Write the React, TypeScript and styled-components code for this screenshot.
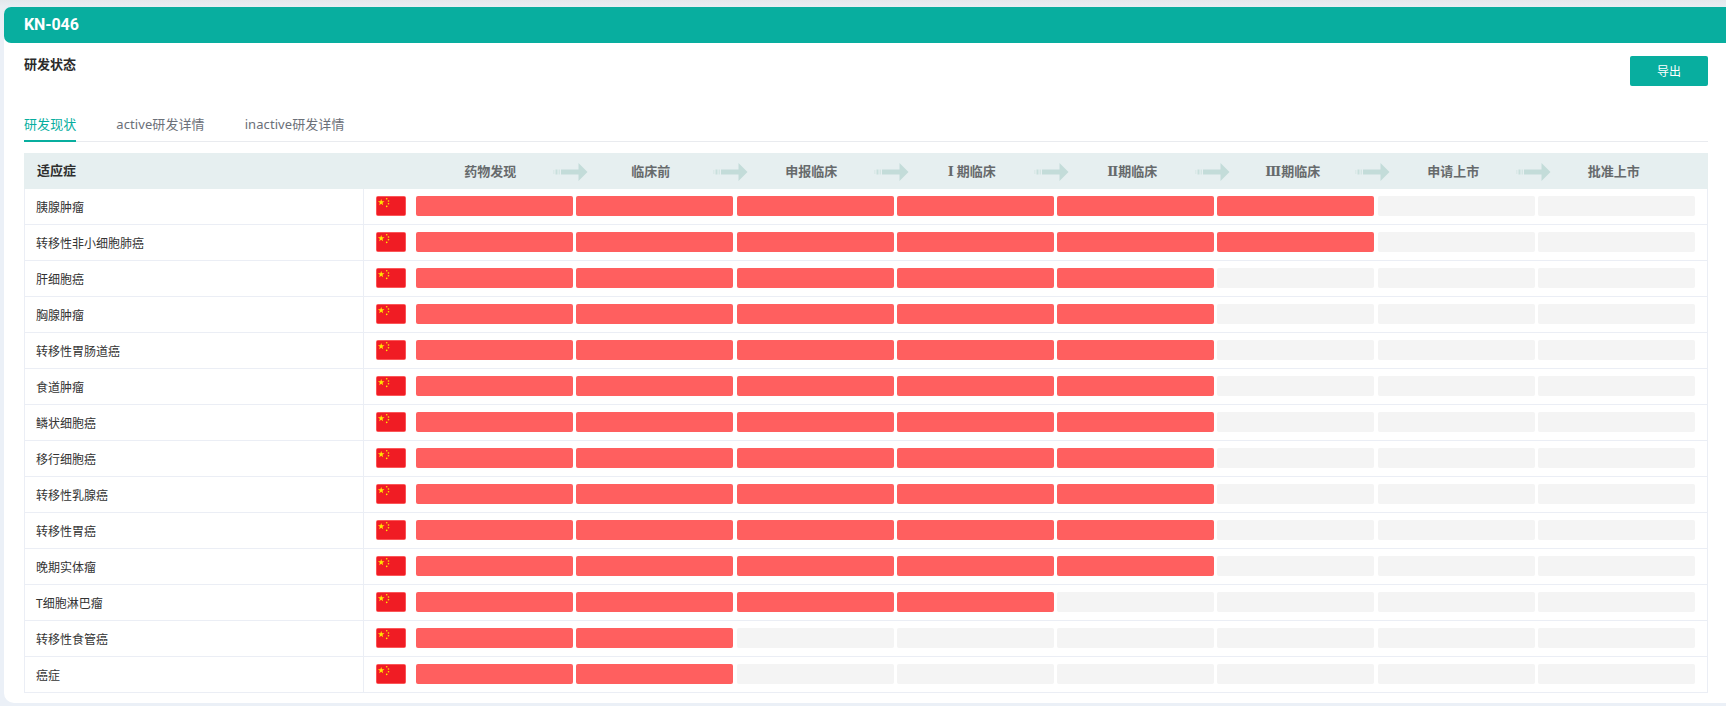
import React from "react";
import styled, { createGlobalStyle } from "styled-components";

const Global = createGlobalStyle`
  html, body { margin: 0; padding: 0; }
  body {
    width: 1726px;
    height: 706px;
    overflow: hidden;
    background: linear-gradient(180deg, #e3e8ec 0, #e9eef3 7px, #ebf0f7 40px);
    font-family: "Noto Sans", "Noto Sans CJK SC", sans-serif;
  }
`;

const Page = styled.div`
  padding: 7px 0 0 4px;
`;

const Card = styled.main`
  height: 696px;
  box-sizing: border-box;
  background: #fff;
  border-radius: 7px 0 0 10px;
`;

const Banner = styled.header`
  height: 36px;
  display: flex;
  align-items: center;
  padding: 0 0 2px 20px;
  box-sizing: border-box;
  background: #08ae9f;
  border-radius: 7px 0 0 7px;
  color: #fff;
  font-family: Roboto, "Noto Sans", sans-serif;
  font-size: 16px;
  font-weight: 700;
  letter-spacing: -0.1px;
`;

const Body = styled.div`
  padding: 0 18px 0 20px;
`;

const TitleRow = styled.div`
  display: flex;
  justify-content: space-between;
  align-items: flex-start;
  height: 72px;
  padding-top: 13px;
  box-sizing: border-box;
`;

const Title = styled.h2`
  margin: -1px 0 0;
  font-size: 13px;
  line-height: 18px;
  font-weight: 700;
  color: #2b2b2b;
`;

const ExportButton = styled.button`
  width: 78px;
  height: 30px;
  border: 0;
  border-radius: 2px;
  background: #08ae9f;
  color: #fff;
  font: inherit;
  font-size: 12px;
  padding: 0;
`;

const Tabs = styled.nav`
  display: flex;
  gap: 40px;
  height: 26px;
  border-bottom: 1px solid #e9ebef;
  margin-bottom: 11px;
`;

const Tab = styled.div<{ $active?: boolean }>`
  height: 27px;
  box-sizing: border-box;
  font-size: 13px;
  line-height: 18px;
  letter-spacing: 0.08px;
  color: ${(p) => (p.$active ? "#08ae9f" : "#6b7078")};
  border-bottom: 2px solid ${(p) => (p.$active ? "#08ae9f" : "transparent")};
`;

const Table = styled.section`
  width: 1684px;
`;

const HeaderRow = styled.div`
  height: 36px;
  display: grid;
  grid-template-columns: 386px repeat(8, 160.5px);
  align-items: center;
  background: #e6eff0;
`;

const IndicationHead = styled.div`
  padding: 0 0 3px 13px;
  font-size: 13px;
  font-weight: 700;
  color: #2f2f2f;
`;

const StageHead = styled.div`
  position: relative;
  text-align: center;
  padding-bottom: 2px;
  font-family: "Noto Sans CJK SC", sans-serif;
  font-size: 13px;
  font-weight: 700;
  color: #666a6c;
`;

const Numeral = styled.span<{ $spaced?: boolean }>`
  font-family: "DejaVu Serif", "Liberation Serif", serif;
  font-size: 13px;
  line-height: 1;
  margin-right: ${(p) => (p.$spaced ? "3px" : "0")};
`;

const ArrowMark = styled.svg`
  position: absolute;
  left: 142.5px;
  top: 50%;
  margin-top: -8px;
  width: 35px;
  height: 18px;
`;

const Row = styled.div`
  height: 36px;
  box-sizing: border-box;
  display: flex;
  border: solid #ebeef5;
  border-width: 0 1px 1px 1px;
`;

const NameCell = styled.div`
  width: 339px;
  box-sizing: border-box;
  border-right: 1px solid #ebeef5;
  padding-left: 11px;
  display: flex;
  align-items: center;
  font-size: 12px;
  color: #333;
`;

const FlagCell = styled.div`
  width: 52px;
  padding-left: 12px;
  box-sizing: border-box;
  display: flex;
  align-items: flex-start;
  padding-top: 7px;
`;

const Flag = styled.svg`
  display: block;
  width: 30px;
  height: 20px;
  border-radius: 2px;
`;

const Bars = styled.div`
  display: grid;
  grid-template-columns: repeat(8, 157px);
  column-gap: 3.25px;
  padding-top: 7px;
`;

const Bar = styled.div<{ $on: boolean }>`
  height: 20px;
  border-radius: 2px;
  background: ${(p) => (p.$on ? "#ff5f5f" : "#f4f4f4")};
`;

const stages: { numeral?: string; label: string }[] = [
  { label: "药物发现" },
  { label: "临床前" },
  { label: "申报临床" },
  { numeral: "Ⅰ", label: "期临床" },
  { numeral: "Ⅱ", label: "期临床" },
  { numeral: "Ⅲ", label: "期临床" },
  { label: "申请上市" },
  { label: "批准上市" },
];

const rows: [string, number][] = [
  ["胰腺肿瘤", 6],
  ["转移性非小细胞肺癌", 6],
  ["肝细胞癌", 5],
  ["胸腺肿瘤", 5],
  ["转移性胃肠道癌", 5],
  ["食道肿瘤", 5],
  ["鳞状细胞癌", 5],
  ["移行细胞癌", 5],
  ["转移性乳腺癌", 5],
  ["转移性胃癌", 5],
  ["晚期实体瘤", 5],
  ["T细胞淋巴瘤", 4],
  ["转移性食管癌", 2],
  ["癌症", 2],
];

const Arrow = () => (
  <ArrowMark viewBox="0 0 35 18">
    <rect x="0" y="7" width="1.5" height="4" fill="#dbe9e8" />
    <rect x="2.5" y="6.5" width="2" height="5" fill="#c8dfdc" />
    <rect x="5.5" y="6.5" width="1.5" height="5" fill="#d3e5e3" />
    <path d="M8 6.5 H25.5 V0 L34.5 9 L25.5 18 V11.5 H8 Z" fill="#c3dcd9" />
  </ArrowMark>
);

const ChinaFlag = () => (
  <Flag viewBox="0 0 30 20">
    <rect width="30" height="20" fill="#ff6a6a" />
    <rect x="0.7" y="0.7" width="28.6" height="18.6" rx="1" fill="#f01c24" />
    <path d="M5.2 3 L6 5.3 L8.5 5.3 L6.5 6.8 L7.2 9.2 L5.2 7.8 L3.2 9.2 L3.9 6.8 L1.9 5.3 L4.4 5.3 Z" fill="#ffe600" />
    <circle cx="10.7" cy="2.7" r="0.8" fill="#ffe600" />
    <circle cx="12.5" cy="5" r="0.8" fill="#ffe600" />
    <circle cx="12.5" cy="7.8" r="0.8" fill="#ffe600" />
    <circle cx="10.7" cy="10.4" r="0.8" fill="#ffe600" />
  </Flag>
);

export default function App() {
  return (
    <Page>
      <Global />
      <Card>
        <Banner>KN-046</Banner>
        <Body>
          <TitleRow>
            <Title>研发状态</Title>
            <ExportButton>导出</ExportButton>
          </TitleRow>
          <Tabs>
            <Tab $active>研发现状</Tab>
            <Tab>active研发详情</Tab>
            <Tab>inactive研发详情</Tab>
          </Tabs>
          <Table>
            <HeaderRow>
              <IndicationHead>适应症</IndicationHead>
              {stages.map((s, i) => (
                <StageHead key={i}>
                  {s.numeral && <Numeral $spaced={s.numeral === "Ⅰ"}>{s.numeral}</Numeral>}
                  {s.label}
                  {i < 7 && <Arrow />}
                </StageHead>
              ))}
            </HeaderRow>
            {rows.map(([name, done]) => (
              <Row key={name}>
                <NameCell>{name}</NameCell>
                <FlagCell>
                  <ChinaFlag />
                </FlagCell>
                <Bars>
                  {stages.map((_, i) => (
                    <Bar key={i} $on={i < done} />
                  ))}
                </Bars>
              </Row>
            ))}
          </Table>
        </Body>
      </Card>
    </Page>
  );
}
